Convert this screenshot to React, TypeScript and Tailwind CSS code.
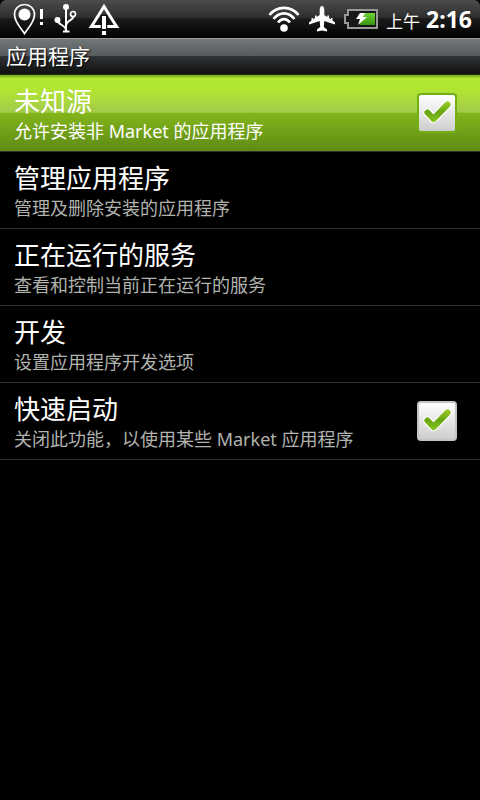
import React, { useState } from "react";

type Setting = {
    id: string;
    title: string;
    summary: string;
    checkable?: boolean;
};

const settings: Setting[] = [
    { id: "unknown-sources", title: "未知源", summary: "允许安装非 Market 的应用程序", checkable: true },
    { id: "manage", title: "管理应用程序", summary: "管理及删除安装的应用程序" },
    { id: "running", title: "正在运行的服务", summary: "查看和控制当前正在运行的服务" },
    { id: "development", title: "开发", summary: "设置应用程序开发选项" },
    { id: "fast-boot", title: "快速启动", summary: "关闭此功能，以使用某些 Market 应用程序", checkable: true },
];

const LocationIcon = () => (
    <svg width="32" height="32" viewBox="0 0 32 32" fill="none">
        <path d="M12.5 30.5C9.5 25.5 2.5 19.5 2.5 11.5C2.5 5.5 7 1.500 12.500 1.500S22.500 5.500 22.500 11.500C22.500 19.500 15.500 25.500 12.500 30.500Z" stroke="#fff" strokeWidth="1.700" />
        <circle cx="12.500" cy="11.500" r="6" fill="#fff" />
        <path d="M28 6h3v10h-3zM28 19h3v3h-3z" fill="#fff" />
    </svg>
);

const UsbIcon = () => (
    <svg width="24" height="32" viewBox="0 0 24 32" fill="none" stroke="#fff" strokeWidth="2">
        <path d="M12 4V28M9 28.500h6.500M3.500 17c0 5 8.500 5 8.500 10M19.500 13c0 5-7.500 4-7.500 10" />
        <circle cx="12" cy="4" r="3" fill="#fff" stroke="none" />
        <circle cx="3.500" cy="17" r="3" fill="#fff" stroke="none" />
        <circle cx="19" cy="11" r="2.500" strokeWidth="1.700" />
    </svg>
);

const WarningIcon = () => (
    <svg width="32" height="32" viewBox="0 0 32 32" fill="none">
        <path d="M16 3.500L28.500 23.500H3.500Z" stroke="#fff" strokeWidth="3" />
        <path d="M12.500 12h7v20h-7z" fill="#111" />
        <path d="M.5 25L3.500 22H12.500V25ZM19.500 22h9l3 3h-12zM14 13h4v13h-4zM14 28h4v4h-4z" fill="#fff" />
    </svg>
);

const WifiIcon = () => (
    <svg width="32" height="28" viewBox="0 0 32 28" fill="none" stroke="#fff" strokeWidth="2.700">
        <path d="M1.500 10C9 .5 23 .5 30.500 10" />
        <path d="M5.500 14C11.500 6.500 20.500 6.500 26.500 14" />
        <path d="M10 17.500C13.500 13 18.500 13 22 17.500" />
        <circle cx="16" cy="23" r="3.800" fill="#fff" stroke="none" />
    </svg>
);

const AirplaneIcon = () => (
    <svg width="28" height="26" viewBox="0 0 28 26" fill="#fff">
        <path d="M14 0c1.500 0 2.300 2 2.300 4v5l3 2V9.500H21V12l2 1.300V12h1.500v2.500l2.500 2v2l-10.700-3.500-.5 6 3.200 2.500v2L14 24.500 9 25.500v-2l3.200-2.500-.5-6L1 18.500v-2l2.500-2V12H5v1.300L7 12V9.500h1.700V11l3-2V4c0-2 .8-4 2.300-4Z" />
    </svg>
);

const BatteryIcon = () => (
    <svg width="34" height="20" viewBox="0 0 34 20">
        <defs>
            <linearGradient id="charge" x1="0" y1="0" x2="0" y2="1">
                <stop offset="0" stopColor="#72d335" />
                <stop offset="1" stopColor="#389411" />
            </linearGradient>
        </defs>
        <path d="M4 1h29v18H4v-5H1V6h3z" fill="#181818" stroke="#999" strokeWidth="2" />
        <path d="M16 4h15v12H16z" fill="url(#charge)" />
        <path d="M16 4h5l-2 4h4l-9 8 2-6h-4z" fill="#fff" />
    </svg>
);

const CheckMark = () => (
    <svg className="pointer-events-none absolute inset-0" width="40" height="40" viewBox="0 0 40 40" fill="none" strokeLinecap="round" strokeLinejoin="round">
        <defs>
            <linearGradient id="tick" gradientUnits="userSpaceOnUse" x1="0" y1="8" x2="0" y2="30">
                <stop offset="0" stopColor="#a0d02c" />
                <stop offset="0.5" stopColor="#6aa512" />
                <stop offset="1" stopColor="#8ac823" />
            </linearGradient>
        </defs>
        <path d="M10.500 19.500L16.500 26L30.500 11.500" stroke="#fff" strokeWidth="8.500" />
        <path d="M10.500 19.500L16.500 26L30.500 11.500" stroke="url(#tick)" strokeWidth="6.200" />
    </svg>
);

const StatusBar = () => (
    <header className="flex h-[38px] items-center justify-between rounded-t-md bg-[linear-gradient(#4c4c4c_0%,#2d2d2d_47%,#1c1c1c_48%,#000_100%)] px-2 text-white">
        <div className="flex items-center gap-2.5 pl-1">
            <LocationIcon />
            <UsbIcon />
            <WarningIcon />
        </div>
        <div className="flex items-center gap-2">
            <WifiIcon />
            <AirplaneIcon />
            <BatteryIcon />
            <div className="flex items-baseline gap-1.5">
                <span className="text-[17px]">上午</span>
                <span className="text-[23px] font-bold">2:16</span>
            </div>
        </div>
    </header>
);

const SettingText = ({ title, summary, selected }: { title: string; summary: string; selected: boolean }) => (
    <span className="block min-w-0 flex-1 pt-1">
        <span className="block text-[26px] leading-8 text-white">{title}</span>
        <span className={selected ? "block text-lg leading-7 text-white" : "block text-lg leading-7 text-[#b0b3ae]"}>
            {summary}
        </span>
    </span>
);

const App: React.FC = () => {
    const [selected, setSelected] = useState("unknown-sources");
    const [checked, setChecked] = useState<Record<string, boolean>>({
        "unknown-sources": true,
        "fast-boot": true,
    });

    const toggle = (id: string) => {
        setSelected(id);
        setChecked({ ...checked, [id]: !checked[id] });
    };

    return (
        <div className="min-h-screen bg-black font-['Noto_Sans','Noto_Sans_CJK_SC',sans-serif]">
            <StatusBar />
            <h1 className="flex h-[37px] items-center border-t border-[#999b9c] bg-[linear-gradient(#72777a_0%,#575b5d_47%,#303335_48%,#111_95%,#25300c_100%)] px-1.5 text-[21px] text-white text-shadow-[1px_1px_2px_#000]">
                应用程序
            </h1>
            <ul>
                {settings.map(({ id, title, summary, checkable }) => {
                    const active = id === selected;
                    return (
                        <li
                            key={id}
                            className={
                                active
                                    ? "border-b border-[#303030] bg-[linear-gradient(#77a51b_0%,#b2e832_5%,#b1e532_20%,#a3ca4b_49%,#83b51a_50%,#5e8b15_100%)]"
                                    : "border-b border-[#303030]"
                            }
                        >
                            {checkable ? (
                                <label className="flex h-19 items-center pr-[23px] pl-3.5">
                                    <SettingText title={title} summary={summary} selected={active} />
                                    <span className="relative size-10">
                                        <input
                                            type="checkbox"
                                            checked={checked[id]}
                                            onChange={() => toggle(id)}
                                            className={
                                                active
                                                    ? "block size-10 appearance-none rounded-sm border-2 border-[#74ae15] bg-linear-to-b from-white to-[#cecece]"
                                                    : "block size-10 appearance-none rounded-sm border-2 border-[#c4c4c4] bg-linear-to-b from-white to-[#cecece]"
                                            }
                                        />
                                        {checked[id] && <CheckMark />}
                                    </span>
                                </label>
                            ) : (
                                <button
                                    type="button"
                                    onClick={() => setSelected(id)}
                                    className="flex h-19 w-full items-center pr-[23px] pl-3.5 text-left"
                                >
                                    <SettingText title={title} summary={summary} selected={active} />
                                </button>
                            )}
                        </li>
                    );
                })}
            </ul>
        </div>
    );
};

export default App;
